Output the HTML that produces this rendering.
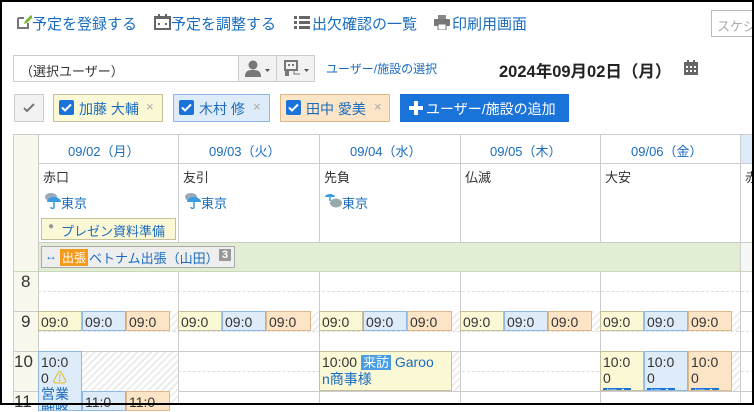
<!DOCTYPE html>
<html><head><meta charset="utf-8"><style>
*{margin:0;padding:0;box-sizing:border-box}
body{width:754px;height:405px;overflow:hidden;background:#fff;font-family:"Liberation Sans","Noto Sans CJK JP",sans-serif;font-size:13px;color:#333;position:relative}
.a{position:absolute;white-space:nowrap}
.lk{color:#1a6cbf}
.hat{background:repeating-linear-gradient(135deg,#fff 0 3px,#ececec 3px 5px)}
.ev{position:absolute;font-size:14px;line-height:16px;padding:2px 0 0 2px;overflow:hidden;color:#333}
.y{background:#fbf8d6;border:1px solid #c7bf9b}
.b{background:#deebf8;border:1px solid #8fb8e6}
.o{background:#fce4c6;border:1px solid #dfb88a}
.tag{background:#4a9de0;color:#fff;padding:0 2px;font-size:13px}
.tagd{background:#1a73d9;color:#fff;padding:0 2px;font-size:12px}
.vl{position:absolute;width:1px;background:#ccc}
.hl{position:absolute;height:1px;background:#ccc}
.dl{position:absolute;height:0;border-top:1px dashed #ddd}
</style></head><body>
<div class="a" style="left:0;top:0;width:754px;height:405px;border:2px solid #000;z-index:50;pointer-events:none"></div>

<svg class="a" style="left:16px;top:14px" width="16" height="16" viewBox="0 0 16 16"><path d="M2 4h6M2 4v10h10V9" fill="none" stroke="#777" stroke-width="2"/><path d="M8 10l1-3 6-6 2 2-6 6z" fill="#7cb82f"/></svg>
<div class="a lk" style="left:32px;top:13px;font-size:15px">予定を登録する</div>
<svg class="a" style="left:154px;top:14px" width="17" height="16" viewBox="0 0 17 16"><rect x="1" y="3" width="15" height="12" fill="none" stroke="#666" stroke-width="2"/><rect x="1" y="2" width="15" height="3" fill="#666"/><rect x="4" y="0" width="2" height="4" fill="#666"/><rect x="11" y="0" width="2" height="4" fill="#666"/><rect x="4" y="9" width="2" height="2" fill="#666"/><rect x="11" y="9" width="2" height="2" fill="#666"/></svg>
<div class="a lk" style="left:171px;top:13px;font-size:15px">予定を調整する</div>
<svg class="a" style="left:294px;top:16px" width="16" height="13" viewBox="0 0 16 13"><g fill="#666"><rect x="0" y="0" width="3" height="3"/><rect x="5" y="0" width="11" height="3"/><rect x="0" y="5" width="3" height="3"/><rect x="5" y="5" width="11" height="3"/><rect x="0" y="10" width="3" height="3"/><rect x="5" y="10" width="11" height="3"/></g></svg>
<div class="a lk" style="left:312px;top:13px;font-size:15px">出欠確認の一覧</div>
<svg class="a" style="left:434px;top:15px" width="16" height="15" viewBox="0 0 16 15"><rect x="4" y="0" width="8" height="4" fill="#888"/><rect x="0" y="4" width="16" height="7" rx="1" fill="#777"/><rect x="4" y="9" width="8" height="6" fill="#fff" stroke="#777"/></svg>
<div class="a lk" style="left:452px;top:13px;font-size:15px">印刷用画面</div>
<div class="a" style="left:711px;top:10px;width:50px;height:27px;border:1px solid #bbb;color:#aaa;font-size:13px;padding:5px 0 0 5px">スケジュ</div>

<div class="a" style="left:13px;top:55px;width:302px;height:27px;border:1px solid #ccc"></div>
<div class="a" style="left:20px;top:61px;font-size:13px">（選択ユーザー）</div>
<div class="a" style="left:238px;top:55px;width:77px;height:27px;background:#f2f2f2;border:1px solid #ccc"></div>
<div class="a" style="left:276px;top:55px;width:1px;height:27px;background:#ccc"></div>
<svg class="a" style="left:245px;top:60px" width="28" height="17" viewBox="0 0 28 17"><circle cx="8" cy="5" r="4.5" fill="#777"/><path d="M0 17c0-6 3-7 8-7s8 1 8 7z" fill="#777"/><path d="M20 9h5l-2.5 3z" fill="#555"/></svg>
<svg class="a" style="left:284px;top:60px" width="28" height="17" viewBox="0 0 28 17"><rect x="1" y="1" width="12" height="9" fill="none" stroke="#777" stroke-width="2"/><rect x="4" y="4" width="2" height="2" fill="#777"/><rect x="8" y="4" width="2" height="2" fill="#777"/><rect x="1" y="10" width="4" height="6" fill="#777"/><path d="M10 10v4h6" fill="none" stroke="#777"/><path d="M20 9h5l-2.5 3z" fill="#555"/></svg>
<div class="a lk" style="left:326px;top:60px;font-size:12px">ユーザー/施設の選択</div>
<div class="a" style="left:499px;top:58px;font-size:16.5px;font-weight:bold;color:#222">2024年09月02日（月）</div>
<svg class="a" style="left:684px;top:60px" width="14" height="15" viewBox="0 0 14 15"><rect x="0" y="2" width="14" height="13" fill="#666"/><rect x="3" y="0" width="2" height="3" fill="#666"/><rect x="9" y="0" width="2" height="3" fill="#666"/><g fill="#fff"><rect x="2" y="6" width="2" height="2"/><rect x="6" y="6" width="2" height="2"/><rect x="10" y="6" width="2" height="2"/><rect x="2" y="10" width="2" height="2"/><rect x="6" y="10" width="2" height="2"/><rect x="10" y="10" width="2" height="2"/></g></svg>

<div class="a" style="left:14px;top:94px;width:30px;height:28px;background:#f2f2f2;border:1px solid #ccc"></div>
<svg class="a" style="left:23px;top:103px" width="12" height="10" viewBox="0 0 12 10"><path d="M1 5l3 3 7-7" fill="none" stroke="#777" stroke-width="2"/></svg>
<div class="a" style="left:53px;top:94px;width:110px;height:28px;background:#fbf8d6;border:1px solid #c7bf9b"></div>
<div class="a" style="left:173px;top:94px;width:97px;height:28px;background:#deebf8;border:1px solid #8fb8e6"></div>
<div class="a" style="left:280px;top:94px;width:110px;height:28px;background:#fce4c6;border:1px solid #dfb88a"></div>
<svg class="a" style="left:59px;top:100px" width="15" height="15" viewBox="0 0 15 15"><rect width="15" height="15" rx="2" fill="#1a73d9"/><path d="M3 7.5l3 3 6-6" fill="none" stroke="#fff" stroke-width="2"/></svg>
<svg class="a" style="left:179px;top:100px" width="15" height="15" viewBox="0 0 15 15"><rect width="15" height="15" rx="2" fill="#1a73d9"/><path d="M3 7.5l3 3 6-6" fill="none" stroke="#fff" stroke-width="2"/></svg>
<svg class="a" style="left:286px;top:100px" width="15" height="15" viewBox="0 0 15 15"><rect width="15" height="15" rx="2" fill="#1a73d9"/><path d="M3 7.5l3 3 6-6" fill="none" stroke="#fff" stroke-width="2"/></svg>
<div class="a lk" style="left:79px;top:99px;font-size:14px">加藤 大輔</div><div class="a" style="left:146px;top:99px;color:#aaa;font-size:13px">×</div>
<div class="a lk" style="left:199px;top:99px;font-size:14px">木村 修</div><div class="a" style="left:253px;top:99px;color:#aaa;font-size:13px">×</div>
<div class="a lk" style="left:306px;top:99px;font-size:14px">田中 愛美</div><div class="a" style="left:374px;top:99px;color:#aaa;font-size:13px">×</div>
<div class="a" style="left:400px;top:94px;width:169px;height:28px;background:#1a73d9"></div>
<svg class="a" style="left:408px;top:100px" width="16" height="16" viewBox="0 0 16 16"><path d="M8 1v14M1 8h14" stroke="#fff" stroke-width="4"/></svg>
<div class="a" style="left:426px;top:99px;color:#fff;font-size:14px">ユーザー/施設の追加</div>

<div class="a" style="left:13px;top:134px;width:25px;height:271px;background:#f8f8ec"></div>
<div class="a" style="left:740px;top:134px;width:14px;height:29px;background:#deebf8"></div>
<div class="a" style="left:38px;top:242px;width:702px;height:29px;background:#e1eed3"></div>
<div class="a" style="left:740px;top:242px;width:14px;height:29px;background:#f5f8f5"></div>
<div class="hl" style="left:13px;top:134px;width:741px"></div>
<div class="hl" style="left:38px;top:163px;width:716px"></div>
<div class="hl" style="left:38px;top:242px;width:716px"></div>
<div class="hl" style="left:13px;top:271px;width:741px;background:#c8d8b8"></div>
<div class="hl" style="left:13px;top:311px;width:741px"></div>
<div class="hl" style="left:13px;top:351px;width:741px"></div>
<div class="hl" style="left:13px;top:391px;width:741px"></div>
<div class="dl" style="left:38px;top:291px;width:716px"></div>
<div class="dl" style="left:38px;top:331px;width:716px"></div>
<div class="dl" style="left:38px;top:371px;width:716px"></div>
<div class="vl" style="left:13px;top:134px;height:271px"></div>
<div class="vl" style="left:38px;top:134px;height:271px"></div>
<div class="vl" style="left:178px;top:134px;height:108px"></div><div class="vl" style="left:178px;top:271px;height:134px"></div>
<div class="vl" style="left:319px;top:134px;height:108px"></div><div class="vl" style="left:319px;top:271px;height:134px"></div>
<div class="vl" style="left:460px;top:134px;height:108px"></div><div class="vl" style="left:460px;top:271px;height:134px"></div>
<div class="vl" style="left:600px;top:134px;height:108px"></div><div class="vl" style="left:600px;top:271px;height:134px"></div>
<div class="vl" style="left:740px;top:134px;height:271px"></div>

<div class="a lk" style="left:68px;top:141px">09/02（月）</div>
<div class="a lk" style="left:209px;top:141px">09/03（火）</div>
<div class="a lk" style="left:350px;top:141px">09/04（水）</div>
<div class="a lk" style="left:490px;top:141px">09/05（木）</div>
<div class="a lk" style="left:631px;top:141px">09/06（金）</div>
<div class="a" style="left:43px;top:167px">赤口</div>
<div class="a" style="left:183px;top:167px">友引</div>
<div class="a" style="left:324px;top:167px">先負</div>
<div class="a" style="left:465px;top:167px">仏滅</div>
<div class="a" style="left:605px;top:167px">大安</div>
<div class="a" style="left:745px;top:167px">赤</div>
<svg class="a" style="left:44px;top:192px" width="18" height="17" viewBox="0 0 18 17"><ellipse cx="7" cy="5" rx="6" ry="4" fill="#9ab"/><path d="M3 10a7 5 0 0 1 14 0z" fill="#3a9be0"/><path d="M10 10v5a1.5 1.5 0 0 1-3 0" fill="none" stroke="#3a9be0" stroke-width="1.5"/></svg><div class="a lk" style="left:61px;top:193px">東京</div>
<svg class="a" style="left:184px;top:192px" width="18" height="17" viewBox="0 0 18 17"><ellipse cx="7" cy="5" rx="6" ry="4" fill="#9ab"/><path d="M3 10a7 5 0 0 1 14 0z" fill="#3a9be0"/><path d="M10 10v5a1.5 1.5 0 0 1-3 0" fill="none" stroke="#3a9be0" stroke-width="1.5"/></svg><div class="a lk" style="left:201px;top:193px">東京</div>
<svg class="a" style="left:325px;top:192px" width="18" height="17" viewBox="0 0 18 17"><path d="M0 5a5 3 0 0 1 10 0z" fill="#3a9be0"/><path d="M5 5v4" stroke="#3a9be0" stroke-width="1.5"/><ellipse cx="11" cy="11" rx="6" ry="4.5" fill="#9aa"/></svg><div class="a lk" style="left:342px;top:193px">東京</div>
<div class="a" style="left:41px;top:218px;width:135px;height:22px;background:#fbf8d6;border:1px solid #c7bf9b"></div>
<div class="a" style="left:48px;top:221px;color:#999;font-size:10px">●</div>
<div class="a lk" style="left:61px;top:221px">プレゼン資料準備</div>
<div class="a" style="left:41px;top:246px;width:194px;height:22px;background:#eee;border:1px solid #aaa"></div>
<div class="a" style="left:45px;top:249px;color:#1a73d9;font-size:12px">↔</div>
<div class="a" style="left:60px;top:249px;background:#f29a1b;color:#fff;font-size:12px;padding:0 2px">出張</div>
<div class="a lk" style="left:89px;top:248px">ベトナム出張（山田）</div>
<div class="a" style="left:219px;top:249px;background:#999;color:#fff;font-size:11px;font-weight:bold;padding:0 3px">3</div>

<div class="a" style="left:21px;top:272px;font-size:17px">8</div>
<div class="a" style="left:21px;top:312px;font-size:17px">9</div>
<div class="a" style="left:14px;top:352px;font-size:17px">10</div>
<div class="a" style="left:14px;top:392px;font-size:17px">11</div>

<div class="a hat" style="left:39px;top:311px;width:139px;height:20px"></div>
<div class="a hat" style="left:320px;top:311px;width:140px;height:20px"></div>
<div class="a hat" style="left:461px;top:311px;width:139px;height:20px"></div>
<div class="a hat" style="left:601px;top:311px;width:139px;height:20px"></div>
<div class="a hat" style="left:179px;top:311px;width:140px;height:20px"></div>
<div class="ev y" style="left:38px;top:311px;width:44px;height:20px">09:0</div>
<div class="ev b" style="left:82px;top:311px;width:44px;height:20px">09:0</div>
<div class="ev o" style="left:126px;top:311px;width:44px;height:20px">09:0</div>
<div class="ev y" style="left:178px;top:311px;width:44px;height:20px">09:0</div>
<div class="ev b" style="left:222px;top:311px;width:44px;height:20px">09:0</div>
<div class="ev o" style="left:266px;top:311px;width:45px;height:20px">09:0</div>
<div class="ev y" style="left:319px;top:311px;width:44px;height:20px">09:0</div>
<div class="ev b" style="left:363px;top:311px;width:44px;height:20px">09:0</div>
<div class="ev o" style="left:407px;top:311px;width:45px;height:20px">09:0</div>
<div class="ev y" style="left:460px;top:311px;width:44px;height:20px">09:0</div>
<div class="ev b" style="left:504px;top:311px;width:44px;height:20px">09:0</div>
<div class="ev o" style="left:548px;top:311px;width:44px;height:20px">09:0</div>
<div class="ev y" style="left:600px;top:311px;width:44px;height:20px">09:0</div>
<div class="ev b" style="left:644px;top:311px;width:44px;height:20px">09:0</div>
<div class="ev o" style="left:688px;top:311px;width:44px;height:20px">09:0</div>

<div class="a hat" style="left:82px;top:352px;width:96px;height:53px"></div>
<div class="ev b" style="left:38px;top:351px;width:44px;height:60px">10:0<br>0 <span style="color:#e8b400">⚠</span><br><span class="lk">営業<br>戦略</span></div>
<div class="ev b" style="left:82px;top:391px;width:44px;height:20px">11:0</div>
<div class="ev o" style="left:126px;top:391px;width:44px;height:20px">11:0</div>
<div class="a hat" style="left:452px;top:352px;width:8px;height:39px"></div>
<div class="ev y" style="left:319px;top:351px;width:133px;height:40px">10:00 <span class="tag">来訪</span> <span class="lk">Garoo<br>n商事様</span></div>
<div class="a hat" style="left:732px;top:352px;width:8px;height:39px"></div>
<div class="ev y" style="left:600px;top:351px;width:44px;height:40px">10:0<br>0<br><span class="tagd">打合</span></div>
<div class="ev b" style="left:644px;top:351px;width:44px;height:40px">10:0<br>0<br><span class="tagd">打合</span></div>
<div class="ev o" style="left:688px;top:351px;width:44px;height:40px">10:0<br>0<br><span class="tagd">打合</span></div>
</body></html>
